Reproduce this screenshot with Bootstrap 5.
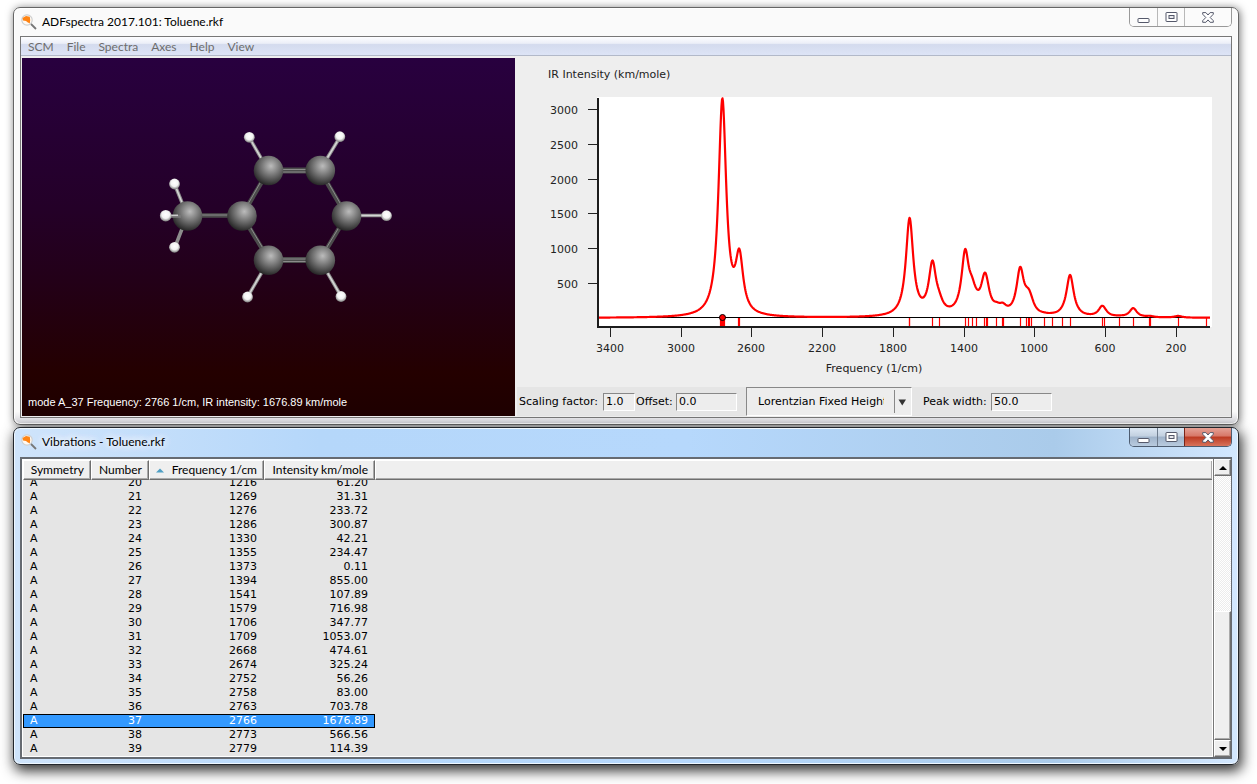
<!DOCTYPE html>
<html lang="en">
<head>
<meta charset="utf-8">
<meta name="viewport" content="width=device-width, initial-scale=1">
<title>ADFspectra 2017.101: Toluene.rkf</title>
<link href="https://cdn.jsdelivr.net/npm/bootstrap@5.3.0/dist/css/bootstrap.min.css" rel="stylesheet">
<style>
  :root { --ui: Lato, "Open Sans", sans-serif; --wide: "DejaVu Sans", sans-serif; }
  body { background: #fff; font-family: var(--wide); font-size: 11px; line-height: 14px; color: #000; }
  .desktop { padding: 7px 18px 18px 13px; gap: 2px; }

  /* window frames */
  .win { border: 1px solid #666; border-radius: 7px; padding: 0 6px 6px; background: linear-gradient(#fafafa 0 97%, #d4d4da); box-shadow: 1px 1px 8px rgba(0,0,0,.55), inset 0 0 0 1px #fff; }
  .win-active { border-color: #22262c; padding-bottom: 5px; background: linear-gradient(90deg, #cfe4fb, #b5d7fa 25%, #b6d8fc 55%, #aacbea 85%, #d3e8ff); box-shadow: 2px 5px 13px 1px rgba(0,0,0,.8), inset 0 0 0 1px #eef7ff; z-index: 1; }
  .title-bar { height: 28px; }
  .win-active .title-bar { height: 29px; }
  .title-text { font: 12px/16px var(--ui); padding: 6px 0 0 5px; margin: 0; }
  .win-active .title-text { text-shadow: 0 0 8px #fff, 0 0 8px #fff, 0 0 10px #fff; }
  .app-icon { width: 16px; height: 16px; margin: 6px 0 0 1px; }
  .win-buttons { border: 1px solid #999; border-top: 0; border-radius: 0 0 5px 5px; height: 19px; overflow: hidden; }
  .win-buttons button { border: 0; border-left: 1px solid #b8b8b8; background: #fbfbfb; padding: 1px 0 0; width: 27px; height: 18px; display: flex; align-items: center; justify-content: center; }
  .win-buttons button:first-child { border-left: 0; }
  .win-buttons button.close-win { width: 47px; }
  .win-active .win-buttons { border-color: #4d5c70; }
  .win-active .win-buttons button { border-color: #6d7b8d; background: linear-gradient(#dce7f3, #c2d0e0 45%, #9fb3ca 50%, #b9cbdf); }
  .win-active .win-buttons .close-win { border-color: #7a2418; background: linear-gradient(#e4a196, #d77767 45%, #bc3a22 50%, #d8735b); }

  /* spectrum window */
  .client { border: 1px solid #777; background: #fff; }
  .menu-bar { height: 19px; padding: 1px 0 0 7px; gap: 13px; background: linear-gradient(#fdfdff, #eceff8 35%, #d4dbee 42%, #dde4f6); border-bottom: 1px solid #b2b9c9; }
  .menu-bar button { border: 0; padding: 0; background: none; font: 12px/16px var(--ui); color: #6d6d6d; }
  .panes { display: grid; grid-template-columns: 493fr 714fr; column-gap: 2px; padding: 2px 0 1px 1px; background: #eee; }
  .viewer { background: linear-gradient(#28003f, #240028 42%, #230018 62%, #240000 88%, #1e0000); }
  .viewer svg, .chart svg { display: block; width: 100%; height: auto; }
  .mode-line { left: 6px; bottom: 7px; color: #fff; font: 11px/14px "Liberation Sans", sans-serif; }
  .options { height: 29px; padding-left: 2px; background: #e5e5e5; }
  .field { height: 18px; border: 1px solid; border-color: #888 #fff #fff #888; border-radius: 0; background: #ededed; padding: 0 0 0 2px; font: 11px/14px var(--wide); color: #000; }
  .label-long { width: 84px; }
  .label-short { width: 40px; }
  .label-mid { width: 68px; }
  .w-short { width: 32px; margin-right: 1px; }
  .w-long { width: 61px; }
  .picker { width: 166px; height: 29px; margin: 0 11px 0 9px; border: 1px solid; border-color: #888 #fff #fff #888; }
  .picker select { appearance: none; width: 100%; height: 27px; border: 0; border-radius: 0; padding: 1px 27px 0 11px; background: #ededed; font: 11px/14px var(--wide); color: #000; }
  .picker svg { top: 2px; right: 0; pointer-events: none; }

  /* spectrum drawing */
  .chart text { font: 11px var(--wide); fill: #222; }

  /* vibrations list */
  .list-frame { border: 2px solid #666b72; border-right-width: 1px; background: #e5e5e5; }
  .list-scroll { height: 298px; overflow: hidden; border: 1px solid #fff; }
  .modes { border-collapse: separate; border-spacing: 0; table-layout: fixed; width: 100%; }
  .modes th { position: sticky; top: 0; height: 20px; padding: 0 6px 0 0; background: #efefef; font: 12px/16px var(--ui); text-align: right; white-space: nowrap; border: 1px solid; border-color: #fff #6e6e6e #6e6e6e #fff; box-shadow: inset -1px -1px #aaa; }
  .modes th:last-child { border-right: 0; }
  .modes td { padding: 0 7px; height: 14px; line-height: 12px; text-align: right; border: 1px solid transparent; border-width: 1px 0; }
  .modes td:first-child { text-align: left; }
  .modes .picked td { background: #39f; color: #fff; border-color: #000; }
  .modes .picked td:first-child { border-left: 1px solid #000; padding-left: 6px; }
  .modes .picked td:nth-child(4) { border-right: 1px solid #000; padding-right: 6px; }
  .modes .picked td:last-child { background: none; border-color: transparent; }
  .bar { width: 18px; border-left: 1px solid #777; background: repeating-conic-gradient(#fff 0 25%, #ececec 0 50%) 0 0 / 2px 2px; }
  .bar button { height: 17px; padding: 0; display: flex; align-items: center; justify-content: center; }
  .bar button, .thumb { background: #efefef; border: 1px solid; border-color: #fff #6e6e6e #6e6e6e #fff; box-shadow: inset -1px -1px #aaa; }
  .thumb { height: 49%; }
</style>
</head>
<body>
<svg width="0" height="0" class="position-absolute" aria-hidden="true">
  <defs>
    <radialGradient id="carbon" cx=".58" cy=".35" r=".68"><stop offset="0" stop-color="#bcbcbc"/><stop offset=".25" stop-color="#969696"/><stop offset=".6" stop-color="#606060"/><stop offset="1" stop-color="#222"/></radialGradient>
    <radialGradient id="hydrogen" cx=".5" cy=".4" r=".6"><stop offset="0" stop-color="#fff"/><stop offset=".55" stop-color="#f2f2f2"/><stop offset="1" stop-color="#777"/></radialGradient>
    <symbol id="logo" viewBox="0 0 16 16">
      <circle cx="6" cy="6" r="5.200" fill="#fffaf4" stroke="#cfcfcf" stroke-width="1.200"/>
      <path d="M1.500 4 5 2 8.800 2.800 9.200 6 8.800 9.500 6.500 8.200 5 7 2 6.600z" fill="#ff8414"/>
      <path d="M10 10 15 15" stroke="#777" stroke-width="1.800"/>
    </symbol>
    <symbol id="minimize" viewBox="0 0 13 10"><rect x="1" y="5.500" width="11" height="4" rx=".5" fill="#fff" stroke="#55596b"/></symbol>
    <symbol id="maximize" viewBox="0 0 13 11"><rect x="1" y=".5" width="11" height="9" rx=".5" fill="#fff" stroke="#55596b"/><rect x="4" y="3.500" width="5" height="3" fill="#e8e8ec" stroke="#55596b"/></symbol>
    <symbol id="close" viewBox="0 0 12 11"><path d="M.7.6h3.200L6 3 8.100.6h3.200v1.600L8.200 5.500l3.100 3.200v1.600H8.100L6 7.900l-2.100 2.400H.7V8.700l3.100-3.200L.7 2.200z" fill="#fff" stroke="#55596b"/></symbol>
  </defs>
</svg>

<main class="desktop d-flex flex-column min-vh-100">
  <section class="win">
    <header class="title-bar d-flex align-items-start">
      <svg class="app-icon"><use href="#logo"/></svg>
      <h1 class="title-text">ADFspectra 2017.101: Toluene.rkf</h1>
      <div class="win-buttons d-flex ms-auto">
        <button type="button" aria-label="Minimize"><svg width="13" height="10"><use href="#minimize"/></svg></button>
        <button type="button" aria-label="Maximize"><svg width="13" height="11"><use href="#maximize"/></svg></button>
        <button type="button" class="close-win" aria-label="Close"><svg width="12" height="11"><use href="#close"/></svg></button>
      </div>
    </header>
    <div class="client">
      <nav class="menu-bar d-flex align-items-center" aria-label="Menu">
        <button type="button">SCM</button><button type="button">File</button><button type="button">Spectra</button><button type="button">Axes</button><button type="button">Help</button><button type="button">View</button>
      </nav>
      <div class="panes">
        <div class="viewer position-relative">
          <svg viewBox="22 58 493 358" role="img" aria-label="Toluene molecule">
            <g stroke="#4c4c4c" stroke-width="4.500" fill="none">
              <path d="M187 215.500H242M242 215.500 268.500 170.500M320 170.500 346.500 216M346.500 216 320 260M242 215.500 269 260"/>
              <path d="M269 170.500H320M269 260H320" stroke-width="6"/>
            </g>
            <g stroke="#8b8b8b" stroke-width="1" fill="none">
              <path d="M187 215H242M242 214.500 267.500 170M321 170 347.500 216M346.500 215 319 260M243 215 270 260M269 169.500H320M269 172H320M269 259H320M269 261.500H320"/>
            </g>
            <g stroke="#8c8c8c" stroke-width="3.500"><path d="M249 137 268 170M340 137 320 170M174.500 184 187 215M175 247 187 216M386 215.500H347M247.500 297 269 260M341 296 320 260"/></g>
            <g stroke="#d5d5d5" stroke-width="1.500"><path d="M249 137 268 170M340 137 320 170M174.500 184 187 215M386 215.500H347M247.500 297 269 260M341 296 320 260"/></g>
            <g fill="url(#carbon)">
              <circle cx="268.500" cy="170.500" r="14.800"/><circle cx="320.300" cy="170.500" r="14.800"/><circle cx="242" cy="216" r="14.800"/><circle cx="346.500" cy="216" r="14.800"/><circle cx="268.500" cy="260.300" r="14.800"/><circle cx="320.300" cy="260.300" r="14.800"/><circle cx="187.500" cy="216" r="14.800"/>
            </g>
            <path d="M166 216.300H181" stroke="#777" stroke-width="3"/><path d="M166 215.300H178" stroke="#ccc" stroke-width="1.500"/>
            <g fill="url(#hydrogen)">
              <circle cx="249.300" cy="137.300" r="5.400"/><circle cx="339.800" cy="136.700" r="5.400"/><circle cx="174.500" cy="184" r="5.400"/><circle cx="165.700" cy="215.700" r="5.800"/><circle cx="174.500" cy="247.300" r="5.400"/><circle cx="386.500" cy="215.700" r="5.400"/><circle cx="247.500" cy="297" r="5.400"/><circle cx="341" cy="296.500" r="5.400"/>
            </g>
          </svg>
          <div class="mode-line position-absolute">mode A_37 Frequency: 2766 1/cm, IR intensity: 1676.89 km/mole</div>
        </div>
        <div class="d-flex flex-column">
          <div class="chart"><svg id="spectrum" viewBox="517 58 714 329" role="img" aria-label="IR spectrum"></svg></div>
          <form class="options d-flex align-items-center mt-auto" onsubmit="return false">
            <label class="label-long" for="scale">Scaling factor:</label><input class="field w-short" id="scale" type="text" value="1.0">
            <label class="label-short" for="offset">Offset:</label><input class="field w-long" id="offset" type="text" value="0.0">
            <div class="picker position-relative">
              <select aria-label="Peak shape"><option>Lorentzian Fixed Height</option></select>
              <svg class="position-absolute" width="17" height="23"><path d="M.5 0V23" stroke="#888"/><path d="M4.500 9.500h7.500l-3.750 6z" fill="#333"/></svg>
            </div>
            <label class="label-mid" for="peak">Peak width:</label><input class="field w-long" id="peak" type="text" value="50.0">
          </form>
        </div>
      </div>
    </div>
  </section>

  <section class="win win-active position-relative">
    <header class="title-bar d-flex align-items-start">
      <svg class="app-icon"><use href="#logo"/></svg>
      <h2 class="title-text">Vibrations - Toluene.rkf</h2>
      <div class="win-buttons d-flex ms-auto">
        <button type="button" aria-label="Minimize"><svg width="13" height="10"><use href="#minimize"/></svg></button>
        <button type="button" aria-label="Maximize"><svg width="13" height="11"><use href="#maximize"/></svg></button>
        <button type="button" class="close-win" aria-label="Close"><svg width="12" height="11"><use href="#close"/></svg></button>
      </div>
    </header>
    <div class="list-frame d-flex">
      <div class="list-scroll flex-grow-1" id="list">
        <table class="modes">
          <colgroup><col style="width:68px"><col style="width:58px"><col style="width:115px"><col style="width:111px"><col></colgroup>
          <thead><tr>
            <th scope="col">Symmetry</th><th scope="col">Number</th>
            <th scope="col"><svg width="8" height="5" class="me-2 align-middle"><path d="M0 4.500 4 .5 8 4.500z" fill="#4f9fc4"/></svg>Frequency 1/cm</th>
            <th scope="col">Intensity km/mole</th><th></th>
          </tr></thead>
          <tbody id="rows"></tbody>
        </table>
      </div>
      <div class="bar d-flex flex-column flex-shrink-0">
        <button type="button" aria-label="Scroll up"><svg width="8" height="4"><path d="M0 4 4 0 8 4z"/></svg></button>
        <div class="flex-grow-1 d-flex flex-column justify-content-end"><div class="thumb"></div></div>
        <button type="button" aria-label="Scroll down"><svg width="8" height="4"><path d="M0 0 4 4 8 0z"/></svg></button>
      </div>
    </div>
  </section>
</main>

<script src="https://cdn.jsdelivr.net/npm/bootstrap@5.3.0/dist/js/bootstrap.bundle.min.js"></script>
<script>
  const modes = [[20,1216,"61.20"],[21,1269,"31.31"],[22,1276,"233.72"],[23,1286,"300.87"],[24,1330,"42.21"],[25,1355,"234.47"],[26,1373,"0.11"],[27,1394,"855.00"],[28,1541,"107.89"],[29,1579,"716.98"],[30,1706,"347.77"],[31,1709,"1053.07"],[32,2668,"474.61"],[33,2674,"325.24"],[34,2752,"56.26"],[35,2758,"83.00"],[36,2763,"703.78"],[37,2766,"1676.89"],[38,2773,"566.56"],[39,2779,"114.39"]];
  const picked = 37;
  document.getElementById("rows").innerHTML = modes.map(([n, f, i]) =>
    `<tr${n === picked ? ' class="picked"' : ""}><td>A</td><td>${n}</td><td>${f}</td><td>${i}</td><td></td></tr>`).join("");
  const list = document.getElementById("list");
  list.scrollTop = list.scrollHeight;

  // lower modes, which only the spectrum shows: [frequency, intensity]
  const low = [[31,2],[190,24],[348,8],[352,8],[444,130],[523,6],[608,30],[620,130],[801,600],[846,4],[902,4],[948,8],[1021,60],[1033,120],[1038,60],[1049,40],[1083,640],[1179,40],[1183,50]];
  const peaks = low.concat(modes.map(m => [m[1], +m[2]]));
  const X = f => 610.3 + (3400 - f) * 0.1769, Y = v => 318 - v * 0.0696;
  const pixel = v => Math.floor(v) + 0.5;
  let d = "";
  for (let x = 598; x <= 1210; x += 0.5) {
    const f = 3400 - (x - 610.3) / 0.1769;
    const v = peaks.reduce((s, [p, h]) => s + h * 625 / ((f - p) ** 2 + 625), 0);
    d += (d ? "L" : "M") + x + " " + Y(v).toFixed(2);
  }
  let s = `<rect x="597" y="97" width="615" height="230" fill="#fff"/><path d="M597 317.500H1210" stroke="#000"/>`;
  peaks.forEach(([f]) => { s += `<path d="M${pixel(X(f))} 318V326" stroke="#f00" stroke-width="1.200"/>`; });
  s += `<path d="${d}" fill="none" stroke="#f00" stroke-width="2.200" stroke-linejoin="round"/>`;
  s += `<path d="M598 98V327H1210" fill="none" stroke="#1c1c1c" stroke-width="2"/>`;
  for (let v = 500; v <= 3000; v += 500) { const y = pixel(Y(v) + .2); s += `<path d="M588 ${y}H597" stroke="#222"/><text x="578" y="${y + 4.5}" text-anchor="end">${v}</text>`; }
  for (let f = 3400; f >= 200; f -= 400) { const x = pixel(X(f)); s += `<path d="M${x} 328V337" stroke="#222"/><text x="${x - .5}" y="352" text-anchor="middle">${f}</text>`; }
  s += `<circle cx="722.500" cy="317.500" r="3" fill="#f00" stroke="#000"/><text x="548" y="78">IR Intensity (km/mole)</text><text x="874" y="372" text-anchor="middle">Frequency (1/cm)</text>`;
  document.getElementById("spectrum").innerHTML = s;
</script>
</body>
</html>
